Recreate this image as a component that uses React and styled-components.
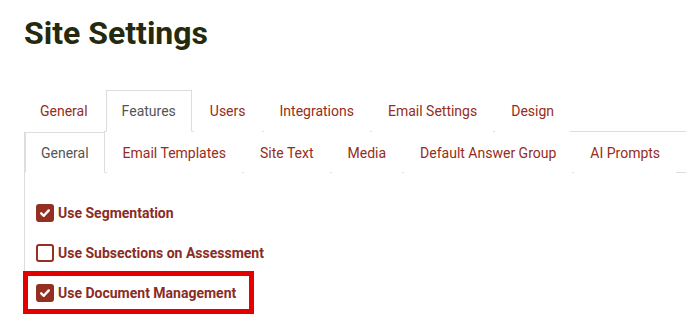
import styled, { createGlobalStyle } from "styled-components";

const GlobalStyle = createGlobalStyle`
  body {
    margin: 0;
    background: #fff;
    font-family: Roboto, "Liberation Sans", sans-serif;
  }
`;

const outerTabs = ["General", "Features", "Users", "Integrations", "Email Settings", "Design"];
const innerTabs = ["General", "Email Templates", "Site Text", "Media", "Default Answer Group", "AI Prompts"];

const options = [
  { label: "Use Segmentation", checked: true },
  { label: "Use Subsections on Assessment", checked: false },
  { label: "Use Document Management", checked: true, highlighted: true },
];

function CheckIcon() {
  return (
    <svg width="12" height="12" viewBox="0 0 12 12">
      <polyline
        points="2.2,6.3 4.8,8.8 9.8,3.4"
        fill="none"
        stroke="#fff"
        strokeWidth="2.4"
        strokeLinecap="round"
        strokeLinejoin="round"
      />
    </svg>
  );
}

function App() {
  return (
    <>
      <GlobalStyle />
      <Page>
        <Title>Site Settings</Title>
        <TabBar>
          {outerTabs.map((t) => (
            <Tab key={t} $active={t === "Features"}>
              {t}
            </Tab>
          ))}
        </TabBar>
        <Panel>
          <TabBar>
            {innerTabs.map((t) => (
              <Tab key={t} $active={t === "General"} $compact>
                {t}
              </Tab>
            ))}
          </TabBar>
          <Content>
            {options.map((o) => (
              <Option key={o.label} $highlighted={o.highlighted}>
                <Box $checked={o.checked}>{o.checked && <CheckIcon />}</Box>
                <Label>{o.label}</Label>
              </Option>
            ))}
          </Content>
        </Panel>
      </Page>
    </>
  );
}

export default App;

const Page = styled.div`
  padding: 0 0 30px 24px;
  overflow: hidden;
`;

const Title = styled.h1`
  margin: 14px 0 38px;
  font-size: 32px;
  line-height: 38px;
  font-weight: 700;
  color: #262a0c;
`;

const TabBar = styled.ul`
  display: flex;
  margin: 0;
  padding: 0;
  list-style: none;
  border-bottom: 1px solid #ddd;
`;

const Tab = styled.li`
  margin: 0 2px -1px 0;
  padding: ${(p) => (p.$compact ? "10px 15px 9px" : "10px 15px")};
  font-size: 14px;
  line-height: 20px;
  white-space: nowrap;
  color: ${(p) => (p.$active ? "#555" : "#952d20")};
  background: #fff;
  border: 1px solid ${(p) => (p.$active ? "#ddd" : "transparent")};
  border-bottom-color: ${(p) => (p.$active ? "#fff" : "transparent")};
`;

const Panel = styled.div`
  border-left: 1px solid #ddd;
  width: 1000px;
`;

const Content = styled.div`
  display: flex;
  flex-direction: column;
  align-items: flex-start;
  gap: 22px;
  padding: 31px 0 0 10px;
`;

const Option = styled.div`
  display: inline-flex;
  align-items: center;
  gap: 4px;
  padding: ${(p) => (p.$highlighted ? "1px 6px 0 1px" : "0 0 0 1px")};
  margin-top: ${(p) => (p.$highlighted ? "-1px" : "0")};
  outline: ${(p) => (p.$highlighted ? "5px solid #e40000" : "none")};
  outline-offset: 7px;
`;

const Box = styled.span`
  box-sizing: border-box;
  display: flex;
  align-items: center;
  justify-content: center;
  width: 18px;
  height: 18px;
  border-radius: 3px;
  background: ${(p) => (p.$checked ? "#952f22" : "#fff")};
  border: 2px solid #952f22;
`;

const Label = styled.span`
  font-size: 14px;
  font-weight: 700;
  line-height: 18px;
  color: #8a2c1f;
`;
